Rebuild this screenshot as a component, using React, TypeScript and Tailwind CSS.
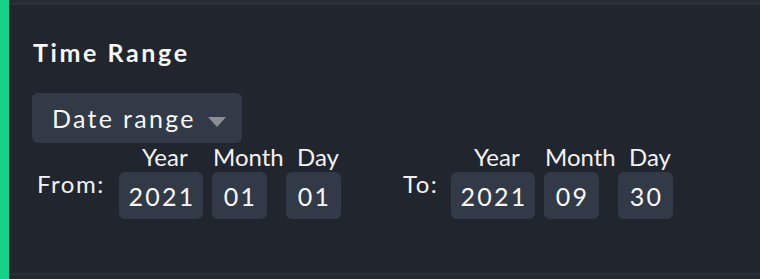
/**
 * Time range filter
 */

const font = { fontFamily: "Lato, 'Noto Sans', sans-serif" };

type DateParts = { year: string; month: string; day: string };

function DateField({ label, value, wide }: { label: string; value: DateParts; wide?: boolean }) {
  return (
    <div className="flex">
      {/* Label column */}
      <div className={wide ? "flex w-[86px] flex-col" : "flex w-[52px] flex-col"}>
        <div className="h-[27px]" />
        <div className="mt-[2px] pl-[4px] text-[24px] leading-[24px] tracking-[1.5px] text-[#f2f2f2]">
          {label}
        </div>
      </div>

      {/* Year */}
      <div className="flex w-[93px] flex-col">
        <div className="pl-[23px] text-[24px] leading-[27px] text-[#f2f2f2]">Year</div>
        <div className="mt-[2px] flex h-[47px] w-[84px] items-center justify-center rounded-[6px] bg-[#313a46] pl-[2px] pt-[2px] text-[25px] tracking-[2.2px] text-[#f7f7f7]">
          {value.year}
        </div>
      </div>

      {/* Month */}
      <div className="flex w-[74px] flex-col">
        <div className="pl-[1px] text-[24px] leading-[27px] text-[#f2f2f2]">Month</div>
        <div className="mt-[2px] flex h-[47px] w-[55px] items-center justify-center rounded-[6px] bg-[#313a46] pl-[2px] pt-[2px] text-[25px] tracking-[2.2px] text-[#f7f7f7]">
          {value.month}
        </div>
      </div>

      {/* Day */}
      <div className="flex w-[55px] flex-col">
        <div className="whitespace-nowrap pl-[11px] text-[24px] leading-[27px] text-[#f2f2f2]">Day</div>
        <div className="mt-[2px] flex h-[47px] w-[55px] items-center justify-center rounded-[6px] bg-[#313a46] pl-[2px] pt-[2px] text-[25px] tracking-[2.2px] text-[#f7f7f7]">
          {value.day}
        </div>
      </div>
    </div>
  );
}

export default function App() {
  return (
    <div className="flex h-[279px] w-[760px] bg-[#21262e]" style={font}>
      {/* Accent bar */}
      <div className="w-[9px] shrink-0 bg-[#15d28b]" />

      <div className="flex flex-1 flex-col">
        <div className="h-[3px] bg-[#252a33]" />
        <div className="h-[2px] bg-[#2b313a]" />

        {/* Body */}
        <div className="flex h-[268px] flex-col pl-[24px] pt-[33px]">
          <h2 className="text-[25px] font-bold leading-[29px] tracking-[2.6px] text-[#f7f7f7]">Time Range</h2>

          {/* Dropdown */}
          <div className="-ml-[1px] mt-[26px] flex h-[50px] w-[210px] items-start justify-between rounded-[6px] bg-[#313a46] pl-[20px] pr-[16px] pt-[7px]">
            <span className="text-[25px] tracking-[2.3px] text-[#f7f7f7]">Date range</span>
            <svg viewBox="0 0 18 10" className="mt-[17px] h-[10px] w-[18px]">
              <path d="M0 0h18L9 10z" fill="#8a8e95" />
            </svg>
          </div>

          {/* From / To */}
          <div className="flex">
            <DateField wide label="From:" value={{ year: "2021", month: "01", day: "01" }} />
            <div className="ml-[58px]">
              <DateField label="To:" value={{ year: "2021", month: "09", day: "30" }} />
            </div>
          </div>
        </div>

        <div className="h-[2px] bg-[#2b313a]" />
        <div className="flex-1 bg-[#232831]" />
      </div>
    </div>
  );
}
